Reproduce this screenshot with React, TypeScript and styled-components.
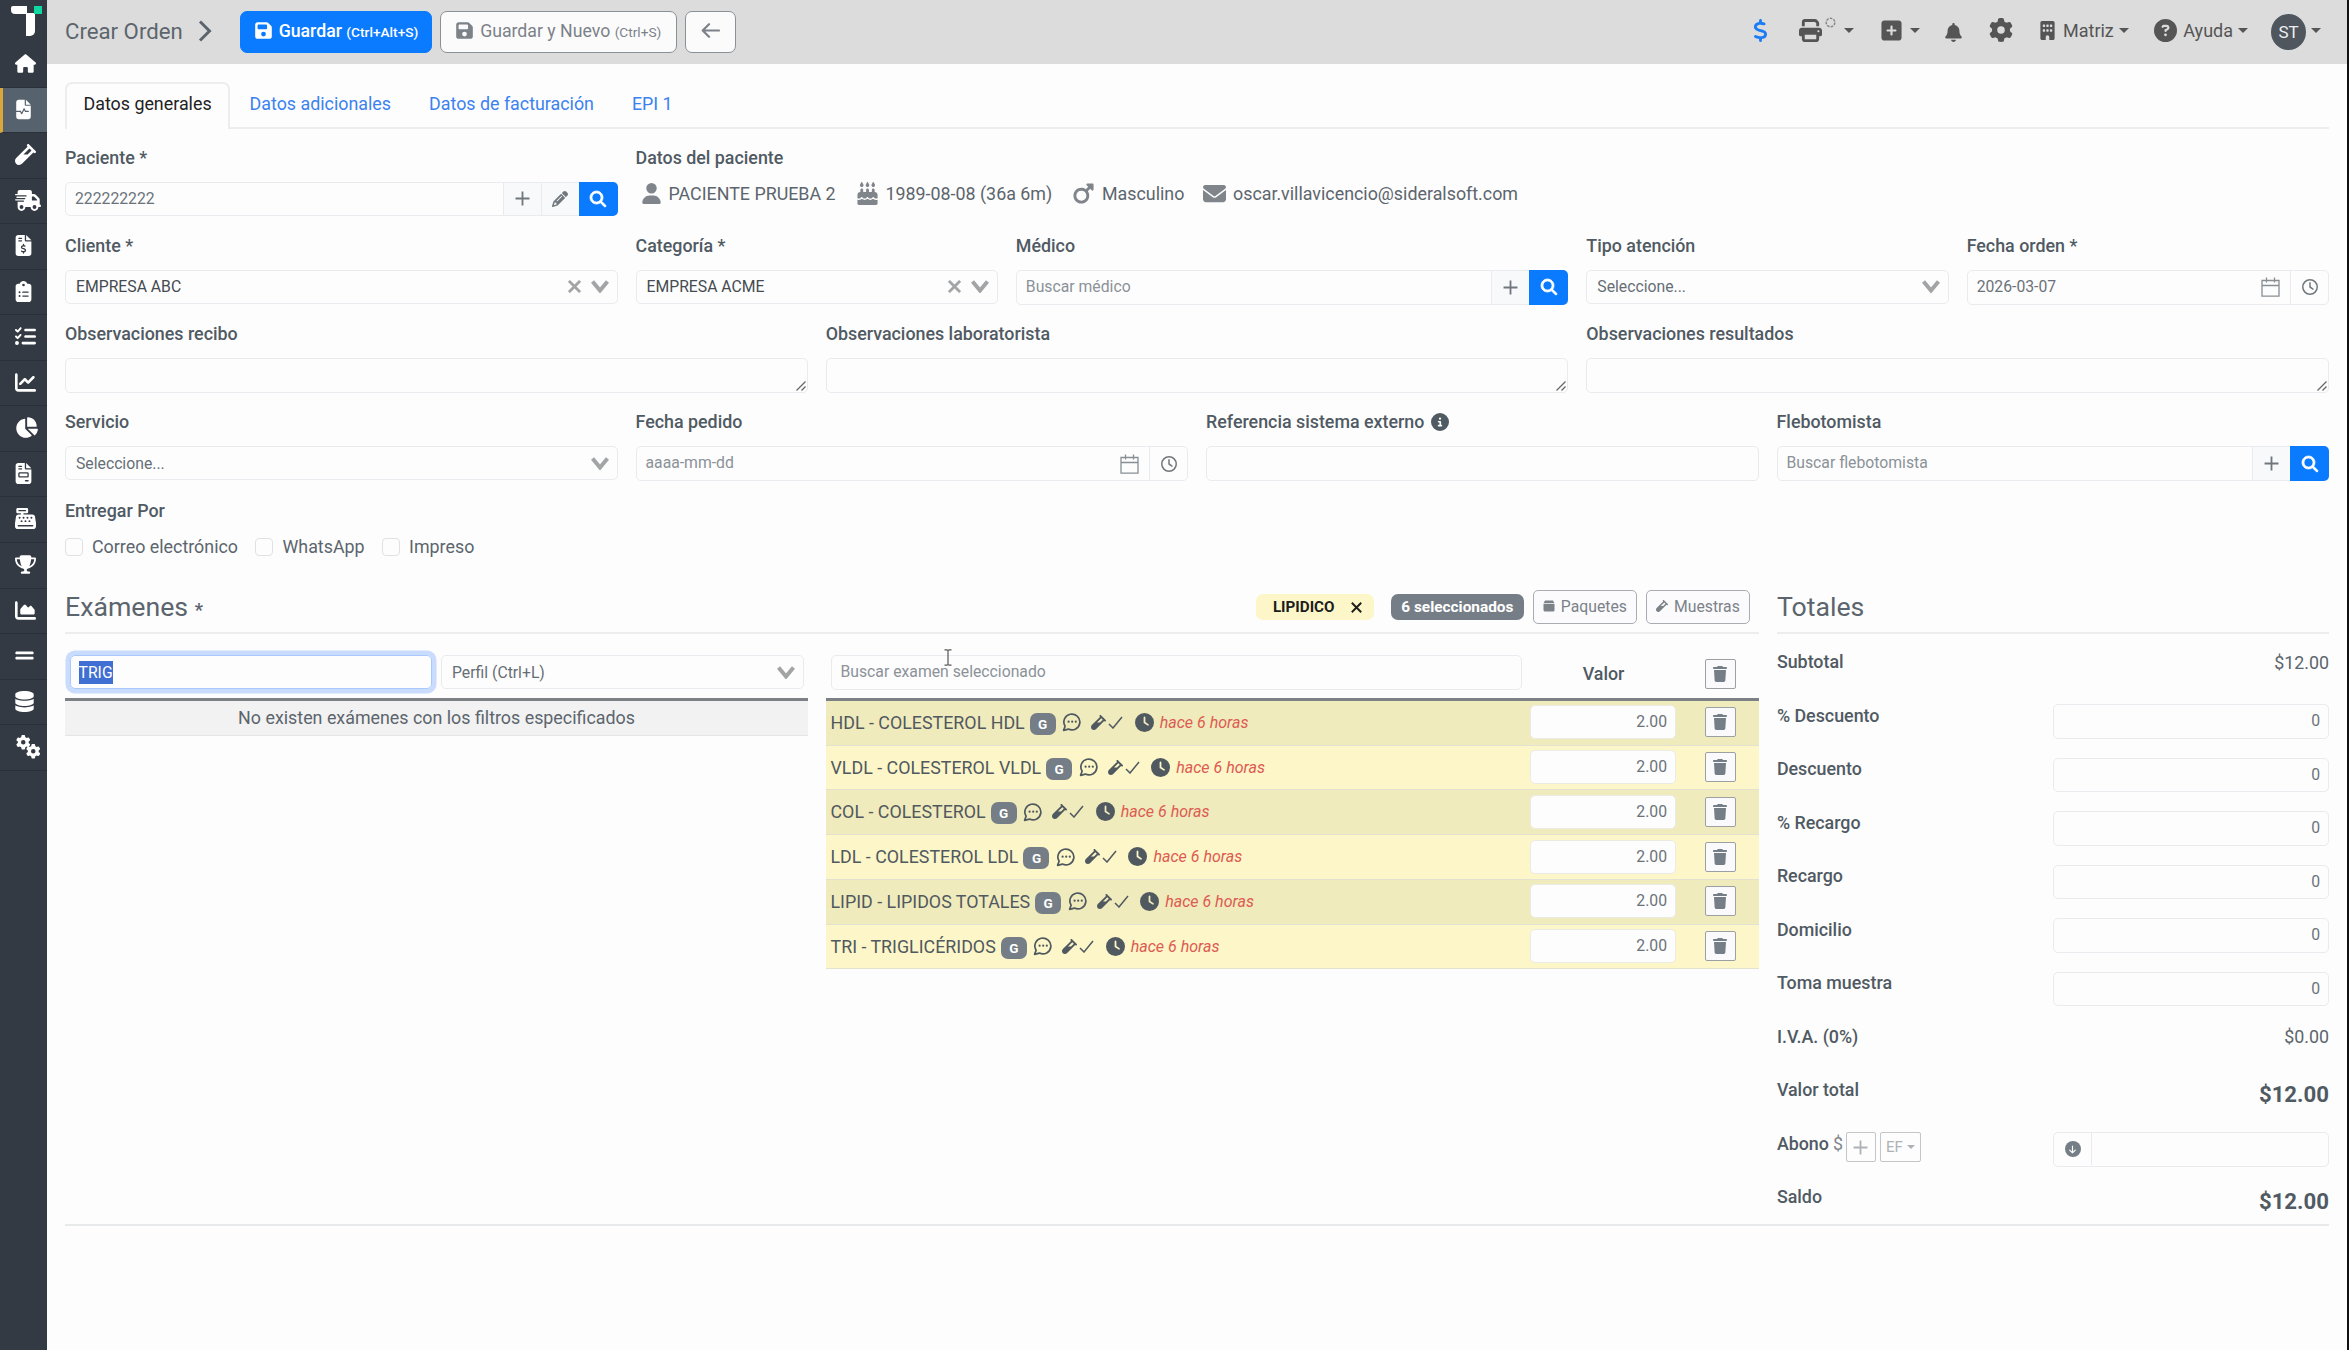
import { ReactNode } from "react";
import styled, { createGlobalStyle } from "styled-components";
import {
  FaArrowDown,
  FaBell,
  FaBuilding,
  FaCakeCandles,
  FaCashRegister,
  FaChartArea,
  FaChartLine,
  FaChartPie,
  FaCircleInfo,
  FaCircleQuestion,
  FaClipboardList,
  FaClock,
  FaDatabase,
  FaDollarSign,
  FaEnvelope,
  FaFileInvoice,
  FaFileInvoiceDollar,
  FaFileWaveform,
  FaFloppyDisk,
  FaGear,
  FaGripLines,
  FaHouse,
  FaListCheck,
  FaMagnifyingGlass,
  FaMars,
  FaPencil,
  FaPrint,
  FaRegClock,
  FaSquarePlus,
  FaTrash,
  FaTrophy,
  FaTruckFast,
  FaUser,
  FaVial,
} from "react-icons/fa6";

const colors = {
  text: "#5c656d",
  label: "#505a63",
  muted: "#8b9298",
  border: "#e9ebee",
  blue: "#0a7aff",
  link: "#3b82f0",
  gray: "#757e86",
  page: "#fdfdfd",
  sidebar: "#343a43",
};

const GearsIcon = () => (
  <S_Gears>
    <FaGear />
    <FaGear />
  </S_Gears>
);

const menuItems = [
  { id: "home", icon: <FaHouse />, width: 21 },
  { id: "orders", icon: <FaFileWaveform />, width: 17, active: true },
  { id: "samples", icon: <FaVial />, width: 21 },
  { id: "shipping", icon: <FaTruckFast />, width: 26 },
  { id: "billing", icon: <FaFileInvoiceDollar />, width: 17 },
  { id: "clipboard", icon: <FaClipboardList />, width: 17 },
  { id: "tasks", icon: <FaListCheck />, width: 21 },
  { id: "chart", icon: <FaChartLine />, width: 21 },
  { id: "pie", icon: <FaChartPie />, width: 23 },
  { id: "invoice", icon: <FaFileInvoice />, width: 17 },
  { id: "register", icon: <FaCashRegister />, width: 21 },
  { id: "trophy", icon: <FaTrophy />, width: 21 },
  { id: "area", icon: <FaChartArea />, width: 21 },
  { id: "lines", icon: <FaGripLines />, width: 19 },
  { id: "database", icon: <FaDatabase />, width: 19 },
  { id: "settings", icon: <GearsIcon />, width: 14.5 },
];

const tabs = ["Datos generales", "Datos adicionales", "Datos de facturación", "EPI 1"];

const exams = [
  "HDL - COLESTEROL HDL",
  "VLDL - COLESTEROL VLDL",
  "COL - COLESTEROL",
  "LDL - COLESTEROL LDL",
  "LIPID - LIPIDOS TOTALES",
  "TRI - TRIGLICÉRIDOS",
];

const editableTotals = [
  "% Descuento",
  "Descuento",
  "% Recargo",
  "Recargo",
  "Domicilio",
  "Toma muestra",
];

const Logo = () => (
  <svg width="32" height="32" viewBox="0 0 32 32">
    <path d="M2 0h14v8H4a4 4 0 0 1-4-4V2a2 2 0 0 1 2-2z" fill="#fff" />
    <path d="M15 7h9v18a5 5 0 0 1-5 5h-4z" fill="#fff" />
    <rect x="23" y="0" width="8" height="8" fill="#0fd9a0" />
  </svg>
);

const PlusIcon = ({ size = 15 }: { size?: number }) => (
  <svg width={size} height={size} viewBox="0 0 14 14">
    <path d="M7 0.5v13M0.5 7h13" stroke="currentColor" strokeWidth="1.7" />
  </svg>
);

const CrossIcon = ({ size = 14, width = 3 }: { size?: number; width?: number }) => (
  <svg width={size} height={size} viewBox="0 0 14 14">
    <path d="M1 1l12 12M13 1L1 13" stroke="currentColor" strokeWidth={width} />
  </svg>
);

const ChevronDown = () => (
  <svg width="18" height="13" viewBox="0 0 18 13">
    <path d="M1.5 1.5L9 10.5l7.5-9" fill="none" stroke="currentColor" strokeWidth="4" />
  </svg>
);

const ChevronRight = () => (
  <svg width="14" height="22" viewBox="0 0 14 22">
    <path d="M2 1.5L11.5 11L2 20.5" fill="none" stroke="currentColor" strokeWidth="3" />
  </svg>
);

const BackIcon = () => (
  <svg width="19" height="15" viewBox="0 0 19 15">
    <path
      d="M18 7.5H2M8 1.2L1.7 7.5L8 13.8"
      fill="none"
      stroke="currentColor"
      strokeWidth="2.2"
      strokeLinecap="round"
      strokeLinejoin="round"
    />
  </svg>
);

const CalendarIcon = () => (
  <svg width="19" height="20" viewBox="0 0 19 20">
    <path
      d="M1 3.5h17v15.7H1zM1 8.5h17M5.5 0.5v5M13.5 0.5v5"
      fill="none"
      stroke="currentColor"
      strokeWidth="1.3"
    />
  </svg>
);

const CommentIcon = () => (
  <svg width="20" height="20" viewBox="0 0 20 20">
    <path
      d="M1.6 18.4l1.5-4.2a8 7.900 0 1 1 3.300 2.900z"
      fill="none"
      stroke="currentColor"
      strokeWidth="1.7"
      strokeLinejoin="round"
    />
    <circle cx="6.6" cy="9.7" r="1.1" fill="currentColor" />
    <circle cx="10.2" cy="9.7" r="1.1" fill="currentColor" />
    <circle cx="13.8" cy="9.7" r="1.1" fill="currentColor" />
  </svg>
);

const BoxIcon = () => (
  <svg width="12" height="12" viewBox="0 0 12 12">
    <path d="M2 0.5h8l1.3 2.6H0.700z" fill="currentColor" />
    <path d="M0.5 3.7h11v6.300a1.500 1.500 0 0 1-1.500 1.500H2a1.500 1.500 0 0 1-1.500-1.500z" fill="currentColor" />
  </svg>
);

const CheckIcon = () => (
  <svg width="15" height="13" viewBox="0 0 15 13">
    <path d="M1 8l4 4L14 1" fill="none" stroke="currentColor" strokeWidth="1.5" />
  </svg>
);

const SpinnerIcon = () => (
  <svg width="11" height="11" viewBox="0 0 11 11">
    <circle
      cx="5.5"
      cy="5.5"
      r="4.3"
      fill="none"
      stroke="currentColor"
      strokeWidth="1.5"
      strokeDasharray="2.6 1.2"
    />
  </svg>
);

const ResizeHandle = () => (
  <S_ResizeHandle width="10" height="10" viewBox="0 0 10 10">
    <path d="M0.5 9.5L9.5 0.5M5.5 9.5L9.5 5.5" stroke="#666" strokeWidth="1.3" />
  </S_ResizeHandle>
);

const TextCursor = () => (
  <S_TextCursor width="8" height="17" viewBox="0 0 8 17">
    <path
      d="M0.5 0.8h2.5l1 0.8l1-0.8h2.5M4 1v15M0.5 16.2h2.5l1-0.8l1 0.8h2.5"
      fill="none"
      stroke="#555"
      strokeWidth="1.2"
    />
  </S_TextCursor>
);

interface FieldProps {
  label: ReactNode;
  span: number;
  children: ReactNode;
}

const Field = ({ label, span, children }: FieldProps) => (
  <S_Field $span={span}>
    <S_Label>{label}</S_Label>
    {children}
  </S_Field>
);

interface SelectProps {
  value: string;
  clearable?: boolean;
}

const Select = ({ value, clearable }: SelectProps) => (
  <S_Select $selected={clearable}>
    <span>{value}</span>
    <S_SelectIcons>
      {clearable && <CrossIcon size={13} />}
      <ChevronDown />
    </S_SelectIcons>
  </S_Select>
);

interface SearchInputProps {
  value?: string;
  placeholder?: string;
  editable?: boolean;
}

const SearchInput = ({ value, placeholder, editable }: SearchInputProps) => (
  <S_InputGroup>
    <S_InputText $placeholder={!value}>{value ?? placeholder}</S_InputText>
    <S_Addon>
      <PlusIcon />
    </S_Addon>
    {editable && (
      <S_Addon>
        <FaPencil size={16} />
      </S_Addon>
    )}
    <S_SearchButton>
      <FaMagnifyingGlass size={16} />
    </S_SearchButton>
  </S_InputGroup>
);

const DateInput = ({ value, placeholder }: SearchInputProps) => (
  <S_InputGroup>
    <S_InputText $placeholder={!value}>{value ?? placeholder}</S_InputText>
    <S_CalendarBox>
      <CalendarIcon />
    </S_CalendarBox>
    <S_ClockBox>
      <FaRegClock size={16} />
    </S_ClockBox>
  </S_InputGroup>
);

const Sidebar = () => (
  <S_Sidebar>
    <S_LogoBox>
      <Logo />
    </S_LogoBox>
    {menuItems.map(({ id, icon, width, active }) => (
      <S_MenuItem key={id} $active={active} $iconWidth={width}>
        {icon}
      </S_MenuItem>
    ))}
  </S_Sidebar>
);

const Header = () => (
  <S_Header>
    <S_PageTitle>Crear Orden</S_PageTitle>
    <S_TitleChevron>
      <ChevronRight />
    </S_TitleChevron>
    <S_Button $primary $width={192}>
      <FaFloppyDisk size={19} />
      <span>
        Guardar <small>(Ctrl+Alt+S)</small>
      </span>
    </S_Button>
    <S_Button $width={236.5}>
      <FaFloppyDisk size={19} />
      <span>
        Guardar y Nuevo <small>(Ctrl+S)</small>
      </span>
    </S_Button>
    <S_Button $width={51}>
      <BackIcon />
    </S_Button>

    <S_HeaderRight>
      <S_HeaderItem $blue $left={0} $width={14}>
        <FaDollarSign size={23} />
      </S_HeaderItem>
      <S_HeaderItem $left={31}>
        <FaPrint size={23} />
        <S_SpinnerBox>
          <SpinnerIcon />
        </S_SpinnerBox>
        <S_Caret $left={8} />
      </S_HeaderItem>
      <S_HeaderItem $left={25.5}>
        <FaSquarePlus size={23} />
        <S_Caret $left={7} />
      </S_HeaderItem>
      <S_HeaderItem $left={24} $drop={4}>
        <FaBell size={19} />
      </S_HeaderItem>
      <S_HeaderItem $left={26}>
        <FaGear size={24} />
      </S_HeaderItem>
      <S_HeaderItem $left={25}>
        <FaBuilding size={19} />
        <S_HeaderText>Matriz</S_HeaderText>
        <S_Caret $left={5} />
      </S_HeaderItem>
      <S_HeaderItem $left={25}>
        <FaCircleQuestion size={23} />
        <S_HeaderText>Ayuda</S_HeaderText>
        <S_Caret $left={5} />
      </S_HeaderItem>
      <S_HeaderItem $left={23}>
        <S_Avatar>ST</S_Avatar>
        <S_Caret $left={5} />
      </S_HeaderItem>
    </S_HeaderRight>
  </S_Header>
);

const GeneralForm = () => (
  <>
    <S_FieldRow>
      <Field label="Paciente *" span={3}>
        <SearchInput value="222222222" editable />
      </Field>
      <Field label="Datos del paciente" span={9}>
        <S_PatientData>
          <S_PatientItem $width={215}>
            <FaUser size={21} />
            PACIENTE PRUEBA 2
          </S_PatientItem>
          <S_PatientItem $width={216.5}>
            <FaCakeCandles size={23} />
            1989-08-08 (36a 6m)
          </S_PatientItem>
          <S_PatientItem $width={131}>
            <FaMars size={23} />
            Masculino
          </S_PatientItem>
          <S_PatientItem>
            <FaEnvelope size={23} />
            oscar.villavicencio@sideralsoft.com
          </S_PatientItem>
        </S_PatientData>
      </Field>
    </S_FieldRow>

    <S_FieldRow>
      <Field label="Cliente *" span={3}>
        <Select value="EMPRESA ABC" clearable />
      </Field>
      <Field label="Categoría *" span={2}>
        <Select value="EMPRESA ACME" clearable />
      </Field>
      <Field label="Médico" span={3}>
        <SearchInput placeholder="Buscar médico" />
      </Field>
      <Field label="Tipo atención" span={2}>
        <Select value="Seleccione..." />
      </Field>
      <Field label="Fecha orden *" span={2}>
        <DateInput value="2026-03-07" />
      </Field>
    </S_FieldRow>

    <S_FieldRow>
      {["recibo", "laboratorista", "resultados"].map((kind) => (
        <Field key={kind} label={`Observaciones ${kind}`} span={4}>
          <S_TextArea>
            <ResizeHandle />
          </S_TextArea>
        </Field>
      ))}
    </S_FieldRow>

    <S_FieldRow>
      <Field label="Servicio" span={3}>
        <Select value="Seleccione..." />
      </Field>
      <Field label="Fecha pedido" span={3}>
        <DateInput placeholder="aaaa-mm-dd" />
      </Field>
      <Field
        label={
          <>
            Referencia sistema externo <FaCircleInfo size={18} />
          </>
        }
        span={3}
      >
        <S_InputGroup />
      </Field>
      <Field label="Flebotomista" span={3}>
        <SearchInput placeholder="Buscar flebotomista" />
      </Field>
    </S_FieldRow>

    <S_FieldRow>
      <Field label="Entregar Por" span={12}>
        <S_CheckList>
          {["Correo electrónico", "WhatsApp", "Impreso"].map((name) => (
            <S_CheckItem key={name}>
              <S_CheckBox />
              {name}
            </S_CheckItem>
          ))}
        </S_CheckList>
      </Field>
    </S_FieldRow>
  </>
);

const ExamRow = ({ name }: { name: string }) => (
  <S_ExamRow>
    <S_ExamName>
      {name}
      <S_GroupBadge>G</S_GroupBadge>
      <S_CommentIcon>
        <CommentIcon />
      </S_CommentIcon>
      <S_SampleIcons>
        <FaVial size={15} />
        <CheckIcon />
      </S_SampleIcons>
      <FaClock size={19} />
      <S_Elapsed>hace 6 horas</S_Elapsed>
    </S_ExamName>
    <S_ValueInput>2.00</S_ValueInput>
    <S_TrashButton>
      <FaTrash size={16} />
    </S_TrashButton>
  </S_ExamRow>
);

const Exams = () => (
  <S_Exams>
    <S_SectionHead>
      <S_SectionTitle>
        Exámenes <b>*</b>
      </S_SectionTitle>
      <S_SectionActions>
        <S_ProfileBadge>
          LIPIDICO
          <CrossIcon size={11} width={2.4} />
        </S_ProfileBadge>
        <S_CountBadge>6 seleccionados</S_CountBadge>
        <S_SmallButton>
          <BoxIcon />
          Paquetes
        </S_SmallButton>
        <S_SmallButton>
          <FaVial size={12} />
          Muestras
        </S_SmallButton>
      </S_SectionActions>
    </S_SectionHead>

    <S_ExamTables>
      <div>
        <S_FilterHead>
          <S_FocusedInput>
            <mark>TRIG</mark>
          </S_FocusedInput>
          <Select value="Perfil (Ctrl+L)" />
        </S_FilterHead>
        <S_EmptyRow>No existen exámenes con los filtros especificados</S_EmptyRow>
      </div>

      <div>
        <S_SelectedHead>
          <S_InputGroup>
            <S_InputText $placeholder>Buscar examen seleccionado</S_InputText>
            <TextCursor />
          </S_InputGroup>
          <S_ValueTitle>Valor</S_ValueTitle>
          <S_TrashButton>
            <FaTrash size={16} />
          </S_TrashButton>
        </S_SelectedHead>
        {exams.map((name) => (
          <ExamRow key={name} name={name} />
        ))}
      </div>
    </S_ExamTables>
  </S_Exams>
);

const Totals = () => (
  <S_Totals>
    <S_SectionHead>
      <S_SectionTitle>Totales</S_SectionTitle>
    </S_SectionHead>
    <S_TotalRows>
      <S_TotalRow>
        <S_Label>Subtotal</S_Label>
        <S_Amount>$12.00</S_Amount>
      </S_TotalRow>
      {editableTotals.map((name) => (
        <S_TotalRow key={name}>
          <S_Label>{name}</S_Label>
          <S_TotalInput>0</S_TotalInput>
        </S_TotalRow>
      ))}
      <S_TotalRow>
        <S_Label>I.V.A. (0%)</S_Label>
        <S_Amount>$0.00</S_Amount>
      </S_TotalRow>
      <S_TotalRow>
        <S_Label>Valor total</S_Label>
        <S_Amount $big>$12.00</S_Amount>
      </S_TotalRow>
      <S_TotalRow>
        <S_PaymentLabel>
          <S_Label>Abono</S_Label>
          <S_Currency>$</S_Currency>
          <S_MiniButton $width={30}>
            <PlusIcon />
          </S_MiniButton>
          <S_MiniButton $width={41}>
            EF
            <S_Caret $left={4} $small />
          </S_MiniButton>
        </S_PaymentLabel>
        <S_TotalInput>
          <S_DownBox>
            <S_DownIcon>
              <FaArrowDown size={9} />
            </S_DownIcon>
          </S_DownBox>
        </S_TotalInput>
      </S_TotalRow>
      <S_TotalRow>
        <S_Label>Saldo</S_Label>
        <S_Amount $big>$12.00</S_Amount>
      </S_TotalRow>
    </S_TotalRows>
  </S_Totals>
);

const App = () => (
  <>
    <GlobalStyle />
    <S_App>
      <Sidebar />
      <S_Main>
        <Header />
        <S_Content>
          <S_Tabs>
            {tabs.map((tab, index) => (
              <S_Tab key={tab} $active={index === 0}>
                {tab}
              </S_Tab>
            ))}
          </S_Tabs>
          <GeneralForm />
          <S_Bottom>
            <Exams />
            <Totals />
          </S_Bottom>
        </S_Content>
      </S_Main>
    </S_App>
  </>
);

export default App;

const GlobalStyle = createGlobalStyle`
  * {
    box-sizing: border-box;
  }

  body {
    margin: 0;
    background: ${colors.page};
    color: ${colors.text};
    font-family: Roboto, "Liberation Sans", sans-serif;
    font-size: 17.85px;
    overflow: hidden;
  }

  svg {
    display: block;
    flex-shrink: 0;
  }
`;

const S_App = styled.div`
  display: flex;
  height: 1350px;
  border-right: 2px solid #111;
`;

const S_Sidebar = styled.nav`
  flex: 0 0 47px;
  background: ${colors.sidebar};
`;

const S_LogoBox = styled.div`
  height: 42px;
  padding: 6px 0 0 11px;
`;

const S_MenuItem = styled.div<{ $active?: boolean; $iconWidth: number }>`
  display: flex;
  align-items: center;
  height: 45.55px;
  padding: 0 0 1.5px ${({ $active }) => ($active ? 12 : 15)}px;
  border-left: ${({ $active }) => ($active ? "3px solid #dba63c" : "none")};
  border-bottom: 1px solid #2b3038;
  background: ${({ $active }) => ($active ? "#56636f" : "transparent")};
  color: white;
  svg {
    width: ${({ $iconWidth }) => $iconWidth}px;
    height: 21px;
  }
`;

const S_Gears = styled.div`
  display: flex;
  padding-left: 1px;
  svg {
    height: 14.5px;
  }
  svg:first-child {
    margin-top: -4px;
  }
  svg:last-child {
    margin: 5px 0 -5px -5px;
  }
`;

const S_Main = styled.main`
  flex: 1;
  min-width: 0;
`;

const S_Header = styled.header`
  display: flex;
  align-items: flex-start;
  height: 64px;
  padding: 11px 26px 0 18px;
  background: #dcdcdc;
`;

const S_PageTitle = styled.h1`
  width: 133px;
  margin: 0;
  font-size: 22.2px;
  font-weight: 400;
  line-height: 40px;
  white-space: nowrap;
`;

const S_TitleChevron = styled.div`
  width: 42px;
  padding-top: 9px;
`;

const S_Button = styled.button<{ $primary?: boolean; $width: number }>`
  display: flex;
  align-items: center;
  justify-content: center;
  gap: 6px;
  width: ${({ $width }) => $width}px;
  height: 42px;
  margin-right: 8px;
  padding: 0 0 3px;
  border: 1px solid ${({ $primary }) => ($primary ? colors.blue : "#8b9095")};
  border-radius: 7px;
  background: ${({ $primary }) => ($primary ? colors.blue : "#fbfbfc")};
  color: ${({ $primary }) => ($primary ? "white" : "#7b8288")};
  font-family: inherit;
  font-size: 17.7px;
  font-weight: ${({ $primary }) => ($primary ? 500 : 400)};
  white-space: nowrap;
  small {
    font-size: 13.7px;
  }
`;

const S_HeaderRight = styled.div`
  display: flex;
  align-items: center;
  height: 38px;
  margin-left: auto;
  color: #555;
`;

const S_HeaderItem = styled.div<{
  $left: number;
  $width?: number;
  $blue?: boolean;
  $drop?: number;
}>`
  display: flex;
  align-items: center;
  justify-content: center;
  width: ${({ $width }) => ($width ? `${$width}px` : "auto")};
  margin-left: ${({ $left }) => $left}px;
  padding-top: ${({ $drop = 0 }) => $drop}px;
  color: ${({ $blue }) => ($blue ? "#1b7cf5" : "inherit")};
`;

const S_SpinnerBox = styled.div`
  align-self: flex-start;
  margin: -2px 0 0 3.5px;
  color: #888;
`;

const S_Caret = styled.span<{ $left: number; $small?: boolean }>`
  margin-left: ${({ $left }) => $left}px;
  border: ${({ $small }) => ($small ? 4 : 5)}px solid transparent;
  border-top-color: currentColor;
  border-bottom: 0;
`;

const S_HeaderText = styled.span`
  margin-left: 6.5px;
  font-size: 18px;
`;

const S_Avatar = styled.span`
  display: flex;
  align-items: center;
  justify-content: center;
  width: 35px;
  height: 36px;
  margin-top: 3px;
  border-radius: 50%;
  background: #4f565e;
  color: #eee;
  font-size: 17px;
`;

const S_Content = styled.div`
  padding: 17.5px 18px 0;
`;

const S_Tabs = styled.div`
  display: flex;
  gap: 1px;
  height: 47px;
  margin-bottom: 17.5px;
  border-bottom: 2px solid #ededee;
`;

const S_Tab = styled.div<{ $active: boolean }>`
  height: 47px;
  padding: 0 16.5px;
  border: 2px solid ${({ $active }) => ($active ? "#ededee" : "transparent")};
  border-bottom: 0;
  border-radius: 7px 7px 0 0;
  background: ${({ $active }) => ($active ? colors.page : "transparent")};
  color: ${({ $active }) => ($active ? "#222" : colors.link)};
  line-height: 40px;
  white-space: nowrap;
`;

const S_FieldRow = styled.div`
  display: grid;
  grid-template-columns: repeat(12, minmax(0, 1fr));
  column-gap: 18px;
  height: 88.3px;
`;

const S_Field = styled.div<{ $span: number }>`
  grid-column: span ${({ $span }) => $span};
`;

const S_Label = styled.div`
  display: flex;
  align-items: center;
  gap: 7px;
  height: 22px;
  margin-bottom: 13.5px;
  color: ${colors.label};
  font-weight: 500;
  white-space: nowrap;
`;

const S_InputGroup = styled.div`
  position: relative;
  display: flex;
  height: 34.8px;
  border: 1.5px solid ${colors.border};
  border-radius: 5px;
  font-size: 15.75px;
`;

const S_InputText = styled.div<{ $placeholder?: boolean }>`
  flex: 1;
  padding-left: 9px;
  color: ${({ $placeholder }) => ($placeholder ? colors.muted : "#6b737a")};
  line-height: 31px;
`;

const S_Addon = styled.div`
  display: flex;
  align-items: center;
  justify-content: center;
  width: 38px;
  border-left: 1.5px solid ${colors.border};
  background: #f8f9fb;
  color: #70787e;
`;

const S_SearchButton = styled(S_Addon)`
  width: 39px;
  margin: -1px -1px -1px 0;
  border: 0;
  border-radius: 0 5px 5px 0;
  background: ${colors.blue};
  color: white;
  svg {
    stroke: currentColor;
    stroke-width: 24px;
    overflow: visible;
  }
`;

const S_CalendarBox = styled.div`
  display: flex;
  align-items: center;
  margin-right: 10px;
  color: #888f94;
`;

const S_ClockBox = styled(S_Addon)`
  background: transparent;
`;

const S_Select = styled.div<{ $selected?: boolean }>`
  display: flex;
  align-items: center;
  justify-content: space-between;
  height: 34px;
  padding: 0 7.5px 0 10px;
  border: 1.5px solid ${colors.border};
  border-radius: 5px;
  color: ${({ $selected }) => ($selected ? "#454b50" : "#666e75")};
  font-size: 15.75px;
`;

const S_SelectIcons = styled.div`
  display: flex;
  align-items: center;
  gap: 10px;
  color: #a2a4a6;
`;

const S_TextArea = styled.div`
  position: relative;
  height: 35px;
  border: 1.5px solid ${colors.border};
  border-radius: 5px;
`;

const S_ResizeHandle = styled.svg`
  position: absolute;
  right: 1px;
  bottom: 1px;
`;

const S_TextCursor = styled.svg`
  position: absolute;
  left: 112px;
  top: -7px;
`;

const S_PatientData = styled.div`
  display: flex;
  align-items: center;
  height: 24px;
  padding-left: 5px;
`;

const S_PatientItem = styled.div<{ $width?: number }>`
  display: flex;
  align-items: center;
  gap: 7px;
  width: ${({ $width }) => ($width ? `${$width}px` : "auto")};
  white-space: nowrap;
  svg {
    color: #80858c;
  }
`;

const S_CheckList = styled.div`
  display: flex;
  gap: 17.5px;
`;

const S_CheckItem = styled.div`
  display: flex;
  align-items: center;
  gap: 9px;
  height: 24px;
`;

const S_CheckBox = styled.span`
  width: 18px;
  height: 18px;
  margin-top: 1px;
  border: 1.5px solid #dfe1e4;
  border-radius: 4px;
`;

const S_Bottom = styled.div`
  display: grid;
  grid-template-columns: 1693.5fr 552fr;
  column-gap: 18px;
  height: 640px;
  margin-top: -1.5px;
  border-bottom: 2px solid #e8e9ea;
`;

const S_Exams = styled.section`
  min-width: 0;
`;

const S_SectionHead = styled.div`
  display: flex;
  align-items: center;
  justify-content: space-between;
  height: 48px;
  margin-bottom: 17px;
  padding-bottom: 3.5px;
  border-bottom: 2px solid #ededee;
`;

const S_SectionTitle = styled.h2`
  margin: 0;
  font-size: 26.7px;
  font-weight: 400;
  b {
    font-size: 18px;
    font-weight: 700;
  }
`;

const S_SectionActions = styled.div`
  display: flex;
  align-items: center;
  gap: 9px;
  padding-right: 9px;
`;

const S_Badge = styled.span`
  display: flex;
  align-items: center;
  height: 26px;
  border-radius: 7px;
  font-weight: 700;
`;

const S_ProfileBadge = styled(S_Badge)`
  gap: 16px;
  width: 118px;
  margin-right: 8px;
  padding-left: 17px;
  background: #fcf6c8;
  color: #1d1d1d;
  font-size: 15.2px;
`;

const S_CountBadge = styled(S_Badge)`
  justify-content: center;
  width: 133px;
  background: ${colors.gray};
  color: white;
  font-size: 15.4px;
`;

const S_SmallButton = styled.button`
  display: flex;
  align-items: center;
  justify-content: center;
  gap: 6px;
  width: 104px;
  height: 34px;
  padding: 0 0 2px;
  border: 1.5px solid #a9adb1;
  border-radius: 5px;
  background: #fbfbfd;
  color: #7b8288;
  font-family: inherit;
  font-size: 15.75px;
`;

const S_ExamTables = styled.div`
  display: grid;
  grid-template-columns: 742.5fr 933fr;
  column-gap: 18px;
`;

const S_FilterHead = styled.div`
  display: grid;
  grid-template-columns: 362.5px 362.5px;
  column-gap: 9px;
  height: 50px;
  padding: 4.5px 4.5px 0;
  border-bottom: 3px solid #7d8186;
`;

const S_FocusedInput = styled.div`
  display: flex;
  align-items: center;
  height: 34px;
  padding-left: 8px;
  border: 1.5px solid #a9c8fb;
  border-radius: 5px;
  box-shadow: 0 0 0 4.5px #c9dcfd;
  font-size: 15.75px;
  mark {
    padding: 2px 0;
    background: #3f6fd2;
    color: white;
  }
`;

const S_EmptyRow = styled.div`
  height: 35.5px;
  border-bottom: 1.5px solid #e4e5e6;
  background: #f2f2f2;
  line-height: 34px;
  text-align: center;
`;

const S_SelectedHead = styled.div`
  display: grid;
  grid-template-columns: 691px 164px 50px;
  height: 50px;
  padding: 4.5px 0 0 4.5px;
  border-bottom: 3px solid #7d8186;
  > button {
    margin: 4px 0 0 19px;
  }
`;

const S_ValueTitle = styled.div`
  color: ${colors.label};
  font-weight: 500;
  line-height: 38px;
  text-align: center;
`;

const S_ExamRow = styled.div`
  display: flex;
  align-items: center;
  height: 44.75px;
  padding: 0 0 1px 4.5px;
  border-bottom: 1.5px solid #e3e1cf;
  background: #fcf6c8;
  &:nth-child(even) {
    background: #f0ebbc;
  }
`;

const S_ExamName = styled.div`
  display: flex;
  align-items: center;
  width: 699.5px;
  color: #50595f;
`;

const S_GroupBadge = styled.span`
  width: 26px;
  height: 22px;
  margin: 3px 6.5px 0 5px;
  border-radius: 7px;
  background: ${colors.gray};
  color: white;
  font-size: 13.5px;
  font-weight: 700;
  line-height: 22px;
  text-align: center;
`;

const S_CommentIcon = styled.span`
  width: 29px;
`;

const S_SampleIcons = styled.span`
  display: flex;
  align-items: center;
  gap: 2px;
  width: 43.5px;
`;

const S_Elapsed = styled.em`
  margin-left: 6px;
  color: #dc5b52;
  font-size: 16px;
`;

const S_ValueInput = styled.div`
  width: 146px;
  height: 34px;
  margin-right: 28.5px;
  padding-right: 8px;
  border: 1.5px solid #ebebe6;
  border-radius: 5px;
  background: ${colors.page};
  color: #6b737a;
  font-size: 15.75px;
  line-height: 31px;
  text-align: right;
`;

const S_TrashButton = styled.button`
  display: flex;
  align-items: center;
  justify-content: center;
  width: 31px;
  height: 30px;
  padding: 0;
  border: 1.5px solid #9da0a2;
  border-radius: 2px;
  background: #fafafc;
  color: ${colors.gray};
`;

const S_Totals = styled.section`
  min-width: 0;
`;

const S_TotalRows = styled.div`
  display: flex;
  flex-direction: column;
`;

const S_TotalRow = styled.div`
  display: grid;
  grid-template-columns: 1fr 1fr;
  height: 53.5px;
`;

const S_Amount = styled.div<{ $big?: boolean }>`
  color: ${({ $big }) => ($big ? colors.label : colors.text)};
  font-size: ${({ $big }) => ($big ? 22.2 : 17.85)}px;
  font-weight: ${({ $big }) => ($big ? 700 : 400)};
  line-height: ${({ $big }) => ($big ? 31 : 24)}px;
  text-align: right;
`;

const S_TotalInput = styled.div`
  height: 34.5px;
  padding-right: 8px;
  border: 1.5px solid ${colors.border};
  border-radius: 5px;
  color: #6b737a;
  font-size: 15.75px;
  line-height: 31px;
  text-align: right;
`;

const S_PaymentLabel = styled.div`
  display: flex;
  align-items: flex-start;
`;

const S_Currency = styled.span`
  margin: 0 3px 0 4px;
  color: #80878d;
  line-height: 23px;
`;

const S_MiniButton = styled.button<{ $width: number }>`
  display: flex;
  align-items: center;
  justify-content: center;
  width: ${({ $width }) => $width}px;
  height: 30px;
  margin-right: 4px;
  padding: 0;
  border: 1.5px solid #c3c6c9;
  border-radius: 2px;
  background: transparent;
  color: #aeb2b6;
  font-family: inherit;
  font-size: 15px;
`;

const S_DownBox = styled.div`
  display: flex;
  align-items: center;
  justify-content: center;
  width: 38.5px;
  height: 31.5px;
  border-right: 1.5px solid ${colors.border};
`;

const S_DownIcon = styled.span`
  display: flex;
  align-items: center;
  justify-content: center;
  width: 16px;
  height: 16px;
  border-radius: 50%;
  background: ${colors.gray};
  color: white;
`;
